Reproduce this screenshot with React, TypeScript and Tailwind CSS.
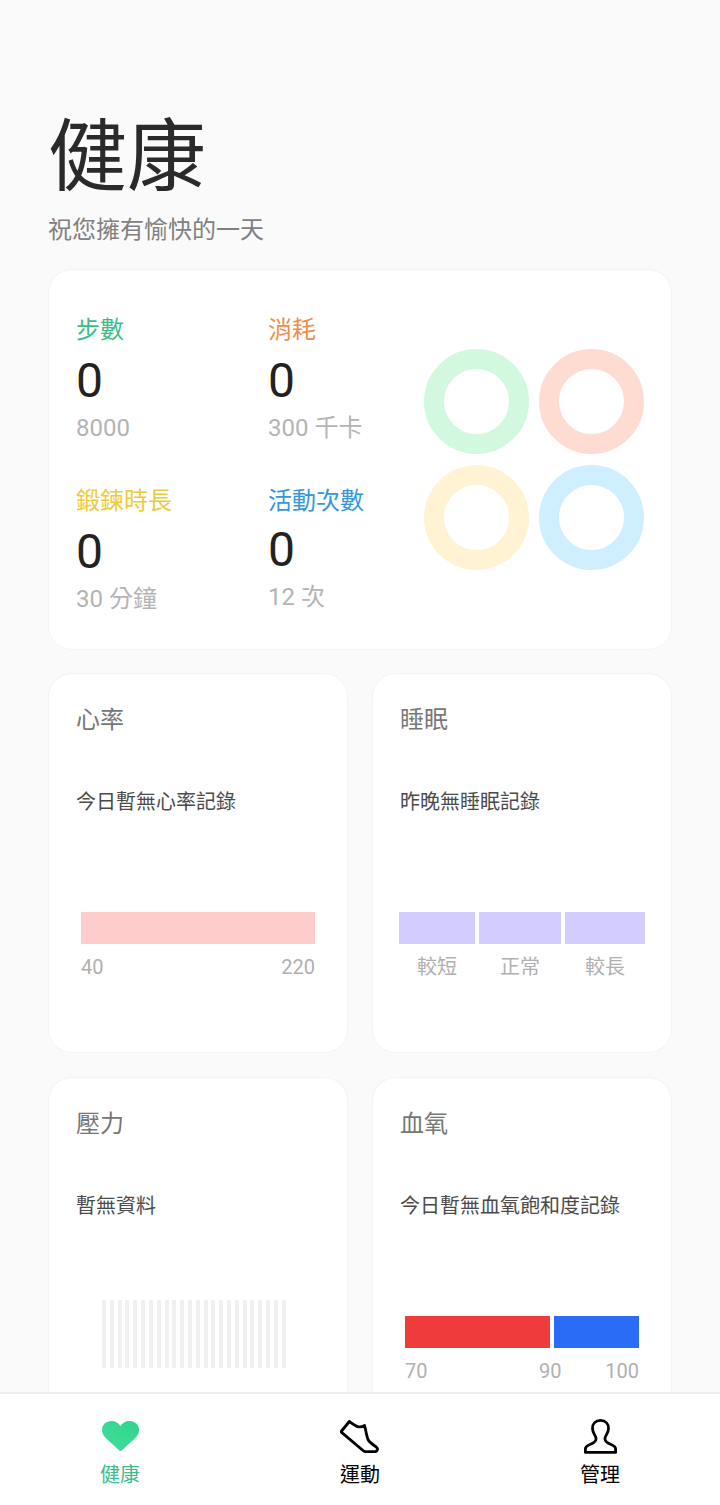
const FONT = 'font-["Roboto","Noto_Sans_CJK_TC",sans-serif]'

function Stat({ label, color, value, goal, valueMt = 'mt-[7px]' }: { label: string; color: string; value: string; goal: string; valueMt?: string }) {
  return (
    <div>
      <div className={`text-[24px] leading-[32px] ${color}`}>{label}</div>
      <div className={`text-[48px] leading-[56px] text-[#222222] ${valueMt}`}>{value}</div>
      <div className="mt-[3px] text-[24px] leading-[32px] text-[#b4b4b4]">{goal}</div>
    </div>
  )
}

function Ring({ color }: { color: string }) {
  return <div className={`h-[105px] w-[105px] rounded-full border-[20px] ${color}`} />
}

function Card({ title, note, children }: { title: string; note: string; children: React.ReactNode }) {
  return (
    <div className="h-[380px] w-[300px] shrink-0 rounded-[24px] border border-[#f4f4f4] bg-white pl-[27px] pt-[30px]">
      <div className="text-[24px] leading-[32px] text-[#777777]">{title}</div>
      <div className="mt-[52px] text-[20px] leading-[28px] text-[#4a4a4a]">{note}</div>
      {children}
    </div>
  )
}

function HeartIcon() {
  return (
    <svg width="37" height="30" viewBox="0 0 37 30">
      <defs>
        <linearGradient id="heartFill" x1="0" y1="1" x2="1" y2="0">
          <stop offset="0" stopColor="#45dc9f" />
          <stop offset="1" stopColor="#2fd48a" />
        </linearGradient>
      </defs>
      <path d="M18.500 5.200C20.300 2 23.500 0 27.500 0 33 0 37 3.800 37 9c0 3.500-1.800 6.200-4.500 8.800L20 29.300c-.9.900-2.100.9-3 0L4.500 17.800C1.800 15.200 0 12.500 0 9 0 3.800 4 0 9.500 0c4 0 7.200 2 9 5.200Z" fill="url(#heartFill)" />
    </svg>
  )
}

function ShoeIcon() {
  return (
    <svg width="40" height="33" viewBox="0 0 40 33" fill="none" stroke="#000" strokeWidth="2.800" strokeLinejoin="round" strokeLinecap="round">
      <path d="M9.300 1.500 1.600 11c-.4.500-.4 1 0 1.400L23 30.500c1 .8 2 1.200 3.300 1.200h8.200c3 0 4-3 1.800-4.600-3.300-2.300-6.800-4.700-8.300-7.600-1.300-3-2.200-9.500-3.500-14-1.800 1.300-4.500 1.700-6.700 1.200-3-.8-5.500-3-8.500-5.200Z" />
    </svg>
  )
}

function UserIcon() {
  return (
    <svg width="33" height="35" viewBox="0 0 33 35" fill="none" stroke="#000" strokeWidth="2.800" strokeLinejoin="round">
      <path d="M16.500 1.400C11.500 1.400 8.500 5 8.500 9.500 8.500 14 11.500 16 12 19 12.500 22 10 24 6 25.500 3 26.700 1.400 28 1.400 30V33.400H31.600V30C31.600 28 30 26.700 27 25.500 23 24 20.500 22 21 19 21.500 16 24.500 14 24.500 9.500 24.500 5 21.500 1.400 16.500 1.400Z" />
    </svg>
  )
}

function NavItem({ label, color, children }: { label: string; color: string; children: React.ReactNode }) {
  return (
    <div className="flex w-[240px] flex-col items-center">
      <div className="flex h-[36px] items-center justify-center">{children}</div>
      <div className={`mt-[7px] text-[20px] leading-[28px] ${color}`}>{label}</div>
    </div>
  )
}

export default function App() {
  const stripes = Array.from({ length: 24 })
  return (
    <div className={`flex h-[1505px] w-[720px] flex-col overflow-hidden bg-[#fafafa] ${FONT}`}>
      <main className="min-h-0 flex-1 overflow-hidden px-[48px] pt-[110px]">
        <h1 className="text-[79px] leading-[96px] text-[#2a2a2a]">健康</h1>
        <p className="mt-[8px] text-[24px] leading-[32px] text-[#808080]">祝您擁有愉快的一天</p>

        <section className="mt-[23px] flex h-[381px] rounded-[24px] border border-[#f4f4f4] bg-white pl-[27px] pt-[44px]">
          <div className="grid h-fit w-[348px] shrink-0 grid-cols-[192px_156px] gap-y-[41px]">
            <Stat label="步數" color="text-[#3dbb8c]" value="0" goal="8000" />
            <Stat label="消耗" color="text-[#ee8d4a]" value="0" goal="300 千卡" />
            <Stat label="鍛鍊時長" color="text-[#eecb3c]" value="0" goal="30 分鐘" />
            <Stat label="活動次數" color="text-[#3498db]" value="0" goal="12 次" valueMt="mt-[5px]" />
          </div>
          <div className="mt-[35px] grid h-fit grid-cols-[105px_105px] gap-x-[10px] gap-y-[11px]">
            <Ring color="border-[#d2f8df]" />
            <Ring color="border-[#ffdcd2]" />
            <Ring color="border-[#fff3d4]" />
            <Ring color="border-[#cfeeff]" />
          </div>
        </section>

        <div className="mt-[23px] flex justify-between">
          <Card title="心率" note="今日暫無心率記錄">
            <div className="ml-[5px] mt-[96px] h-[32px] w-[234px] bg-[#ffcccc]" />
            <div className="ml-[5px] mt-[10px] flex w-[234px] justify-between text-[20px] leading-[26px] text-[#b0b0b0]">
              <span>40</span>
              <span>220</span>
            </div>
          </Card>
          <Card title="睡眠" note="昨晚無睡眠記錄">
            <div className="-ml-[1px] mt-[96px] flex h-[32px] gap-[4px]">
              <div className="w-[76px] bg-[#d2ccff]" />
              <div className="w-[82px] bg-[#d2ccff]" />
              <div className="w-[80px] bg-[#d2ccff]" />
            </div>
            <div className="mt-[10px] flex text-[20px] leading-[26px] text-[#b0b0b0]">
              <span className="ml-[17px]">較短</span>
              <span className="ml-[43px]">正常</span>
              <span className="ml-[45px]">較長</span>
            </div>
          </Card>
        </div>

        <div className="mt-[24px] flex justify-between">
          <Card title="壓力" note="暫無資料">
            <div className="ml-[26px] mt-[80px] flex h-[68px] w-[184px] justify-between">
              {stripes.map((_, i) => (
                <div key={i} className="h-full w-[4px] bg-[#f0f0f0]" />
              ))}
            </div>
          </Card>
          <Card title="血氧" note="今日暫無血氧飽和度記錄">
            <div className="ml-[5px] mt-[96px] flex h-[32px] gap-[4px]">
              <div className="w-[145px] bg-[#ef3b3b]" />
              <div className="w-[85px] bg-[#2a6cf6]" />
            </div>
            <div className="relative ml-[5px] mt-[10px] h-[26px] w-[234px] text-[20px] leading-[26px] text-[#b0b0b0]">
              <span className="absolute left-0">70</span>
              <span className="absolute left-[134px]">90</span>
              <span className="absolute right-0">100</span>
            </div>
          </Card>
        </div>
      </main>

      <nav className="flex h-[113px] shrink-0 border-t-2 border-[#eeeeee] bg-white pt-[24px]">
        <NavItem label="健康" color="text-[#3dbb8c]"><HeartIcon /></NavItem>
        <NavItem label="運動" color="text-black"><ShoeIcon /></NavItem>
        <NavItem label="管理" color="text-black"><UserIcon /></NavItem>
      </nav>
    </div>
  )
}
